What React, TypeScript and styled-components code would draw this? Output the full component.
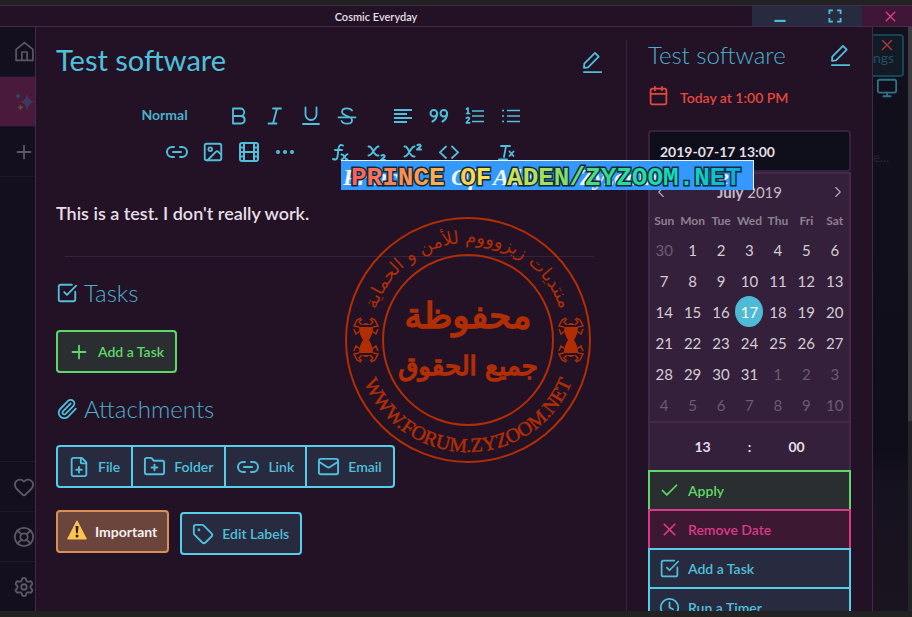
import React from "react";
import styled, { createGlobalStyle, css } from "styled-components";
import {
  Heart, LifeBuoy, Settings, Calendar, Check, X, Plus, SquareCheckBig, Clock, FilePlus, FolderPlus,
  Link2, Mail, Tag, Paperclip, ChevronLeft, ChevronRight, Monitor, Image, Film,
} from "lucide-react";

const C = {
  bg: "#231225", line: "#3a2344", cyan: "#4fc0dc", cyanSoft: "#4ab0cb", border: "#56cde9",
  green: "#5fd86a", pink: "#d93b87", red: "#e5483f", text: "#e4dfe6",
};

const Global = createGlobalStyle`
  * { box-sizing: border-box; }
  body { margin: 0; background: #222222; font-family: Lato, sans-serif; color: ${C.text}; }
  button, input, select { font: inherit; color: inherit; margin: 0; }
  h1, h2, h3, p { margin: 0; }
  svg { display: block; flex: none; }
`;

const Frame = styled.div`
  position: relative;
  display: flex;
  flex-direction: column;
  height: 100vh;
  padding: 5px 0 6px;
  overflow: hidden;
`;
const TitleBar = styled.header`
  display: flex;
  flex: none;
  height: 22px;
  background: ${C.bg};
  border-top: 1px solid #412a4a;
  border-bottom: 1px solid #412a4a;
`;
const AppTitle = styled.div`
  flex: 1;
  text-align: center;
  font-size: 11px;
  line-height: 21px;
  font-weight: 600;
`;
const WinButton = styled.button<{ $close?: boolean }>`
  display: flex;
  align-items: center;
  justify-content: center;
  width: ${(p) => (p.$close ? 50 : 55)}px;
  padding: ${(p) => (p.$close ? "0 0 0 6px" : "0")};
  border: 0;
  background: ${(p) => (p.$close ? "#3f1636" : "#282a40")};
  color: ${(p) => (p.$close ? C.pink : C.cyan)};
`;
const Body = styled.div`
  display: flex;
  flex: 1;
  min-height: 0;
`;
const Rail = styled.nav`
  display: flex;
  flex-direction: column;
  flex: none;
  width: 35px;
  background: #130f1e;
`;
const RailButton = styled.button<{ $active?: boolean; $top?: boolean }>`
  display: flex;
  align-items: center;
  justify-content: flex-end;
  height: 50px;
  padding: 0;
  border: 0;
  ${(p) => (p.$top ? "border-top" : "border-bottom")}: 1px solid #20182a;
  background: ${(p) => (p.$active ? "#4a1a3c" : "transparent")};
  color: #5c5863;
`;
const Spacer = styled.div`flex: 1;`;
const Dialog = styled.section`
  display: flex;
  flex: 1;
  min-width: 0;
  background: ${C.bg};
  border: solid #412a4a;
  border-width: 0 1px;
`;
const Main = styled.main`
  flex: 1;
  min-width: 0;
  margin-top: 13px;
  padding: 0 23px 0 20px;
  border-right: 1px solid ${C.line};
`;
const Side = styled.aside`
  flex: none;
  width: 245px;
  padding: 12px 21px 0 21px;
  overflow: hidden;
`;
const HeadRow = styled.div`
  display: flex;
  align-items: center;
  justify-content: space-between;
`;
const MainTitle = styled.h1`
  color: ${C.cyan};
  font-size: 29px;
  line-height: 40px;
  font-weight: 400;
`;
const SideTitle = styled.h2`
  color: ${C.cyanSoft};
  font-size: 24px;
  line-height: 32px;
  font-weight: 300;
`;
const IconButton = styled.button`
  display: flex;
  align-items: center;
  justify-content: center;
  padding: 0;
  border: 0;
  background: none;
  color: ${C.cyan};
`;
const TitleEdit = styled(IconButton)`padding-top: 4px;`;
const Toolbar = styled.div`
  display: flex;
  flex-direction: column;
  margin-top: 18px;
`;
const ToolRow = styled.div<{ $inset?: boolean }>`
  display: flex;
  justify-content: center;
  gap: 20px;
  height: 36px;
  padding-left: ${(p) => (p.$inset ? 22 : 0)}px;
`;
const ToolGroup = styled.div`display: flex;`;
const Tool = styled(IconButton)`
  width: 36px;
  height: 36px;
`;
const StyleSelect = styled.select`
  width: 70px;
  padding: 0 0 4px 11px;
  border: 0;
  appearance: none;
  background: none;
  color: ${C.cyanSoft};
  font-size: 14px;
  font-weight: 700;
`;
const Note = styled.p`
  margin-top: 31px;
  font-size: 18px;
  line-height: 24px;
  font-weight: 600;
`;
const Rule = styled.hr`
  margin: 31px 9px 0;
  border: 0;
  border-top: 1px solid #322340;
`;
const SectionTitle = styled.h2`
  display: flex;
  align-items: center;
  gap: 6px;
  margin-top: 19px;
  color: ${C.cyanSoft};
  font-size: 24px;
  line-height: 33px;
  font-weight: 300;
  svg { color: ${C.cyan}; }
`;
const tones = {
  cyan: css`border-color: ${C.border}; background: #282a3f; color: ${C.cyan};`,
  green: css`border-color: ${C.green}; background: #2a2e30; color: ${C.green};`,
  pink: css`border-color: ${C.pink}; background: #3d1833; color: ${C.pink};`,
  amber: css`border-color: #d98f57; background: #6b443c; color: #f6efee;`,
};
const Btn = styled.button<{ $tone: keyof typeof tones; $strong?: boolean }>`
  display: inline-flex;
  align-items: center;
  gap: 8px;
  height: 43px;
  padding: ${(p) => (p.$strong ? "0 10px 0 9px" : "0 11px 0 10px")};
  border: 2px solid;
  border-radius: 4px;
  font-size: 14px;
  font-weight: ${(p) => (p.$strong ? 700 : 600)};
  white-space: nowrap;
  ${(p) => tones[p.$tone]}
`;
const ButtonRow = styled.div<{ $gap: number }>`
  display: flex;
  gap: 11px;
  margin-top: ${(p) => p.$gap}px;
`;
const Joined = styled(ButtonRow)`
  gap: 0;
  ${Btn} { border-radius: 0; }
  ${Btn} + ${Btn} { border-left-width: 0; }
  ${Btn}:first-child { border-radius: 4px 0 0 4px; }
  ${Btn}:last-child { border-radius: 0 4px 4px 0; }
`;
const Lowered = styled.div`margin-top: 2px;`;
const Due = styled.p`
  display: flex;
  gap: 11px;
  margin-top: 14px;
  color: ${C.red};
  font-size: 14px;
  line-height: 26px;
  font-weight: 600;
`;
const DateInput = styled.input`
  display: block;
  width: 100%;
  height: 42px;
  margin-top: 19px;
  padding: 0 10px;
  border: 2px solid #37213f;
  border-radius: 4px;
  background: #0e0d1a;
  font-size: 14px;
  font-weight: 700;
`;
const CalendarBox = styled.div`
  background: #35203b;
  border: 2px solid #432a4d;
  border-bottom: 0;
`;
const Month = styled.div`
  display: flex;
  align-items: center;
  justify-content: space-between;
  height: 36px;
  padding: 0 2px;
  color: #c3bac6;
  font-size: 15px;
  strong { font-weight: 700; }
`;
const Days = styled.table`
  width: 100%;
  margin-bottom: 1px;
  border-collapse: collapse;
  table-layout: fixed;
  font-size: 15px;
  th { height: 24px; padding: 0; color: #8d8092; font-size: 12px; line-height: 22px; font-weight: 700; vertical-align: top; }
  td { height: 31px; padding: 0; text-align: center; }
`;
const Day = styled.button<{ $out?: boolean; $on?: boolean }>`
  display: block;
  width: 28px;
  height: 31px;
  margin: 0 auto;
  padding: 0;
  border: 0;
  border-radius: 50%;
  background: ${(p) => (p.$on ? "#4fbad5" : "none")};
  color: ${(p) => (p.$on ? "#fff" : p.$out ? "#6c5b72" : "#d2ccd5")};
`;
const Time = styled.div`
  display: flex;
  align-items: center;
  justify-content: center;
  height: 49px;
  border-top: 2px solid #432a4d;
  font-size: 14px;
  font-weight: 700;
  input { width: 80px; padding: 0; border: 0; background: none; text-align: center; }
  span { width: 14px; text-align: center; }
`;
const Action = styled(Btn)`
  display: flex;
  width: 100%;
  height: 41px;
  padding: 0 9px;
  border-radius: 0;
  & + & { margin-top: -2px; }
`;
const Backdrop = styled.div`
  display: flex;
  flex: none;
  width: 39px;
  background: linear-gradient(#130f1c, #100f1b 40%, #100d1a 72%, #17121f 80%, #19141f);
`;
const BackdropItems = styled.div`
  display: flex;
  flex: 1;
  flex-direction: column;
  color: #2c7488;
`;
const Ghost = styled.button`
  position: relative;
  width: 31px;
  height: 43px;
  margin: 7px 0 0;
  padding: 4px 0 0;
  border: 2px solid #184353;
  border-left: 0;
  border-radius: 0 4px 4px 0;
  background: #121a27;
  color: #25505f;
  font-size: 14px;
  text-align: left;
  svg { position: absolute; top: 0; left: 5px; color: #a6383c; }
`;
const Screen = styled.span`padding-left: 3px;`;
const Ellipsis = styled.span`
  margin-top: 50px;
  color: #292430;
  font-size: 13px;
`;
const Scroll = styled.div`
  width: 4px;
  background: linear-gradient(#3d3c43 0 394px, #26242b 394px);
`;
const Banner = styled.svg`
  position: absolute;
  top: 160px;
  left: 341px;
`;
const Seal = styled.svg`
  position: absolute;
  top: 215px;
  left: 343px;
  pointer-events: none;
`;

const Glyph = ({ children, size = 20, w = 1.8 }: { children: React.ReactNode; size?: number; w?: number }) => (
  <svg width={size} height={size} viewBox="0 0 20 20" fill="none" stroke="currentColor" strokeWidth={w}
    strokeLinecap="round" strokeLinejoin="round" aria-hidden="true">{children}</svg>
);
const Pen = () => (
  <Glyph size={22} w={1.6}>
    <path d="M2 19.2h17" strokeLinecap="butt" />
    <path d="M3 11.5 12.7 1.8l3.4 3.4L6.4 14.900 2.700 15.300z" />
  </Glyph>
);
const Bold = () => <Glyph><path d="M4 2.5h7.5a3.7 3.7 0 0 1 0 7.5H4zM4 10h8.5a3.8 3.8 0 0 1 0 7.5H4z" /></Glyph>;
const Italic = () => <Glyph><path d="M8 2.5h8M3.5 17.5h8M12 2.5l-4 15" /></Glyph>;
const Under = () => <Glyph><path d="M4.5 1.5v7a5.5 5.5 0 0 0 11 0v-7M2 18h16" /></Glyph>;
const Strike = () => (
  <Glyph><path d="M15 4.500C14 2.800 12.300 2.300 10 2.300c-3 0-5 1.300-5 3.500 0 2.400 2.200 3.300 5 4.200 3.300 1 5 1.900 5 4.200 0 2.300-2 3.500-5 3.500-2.600 0-4.600-.8-5.400-2.700M1.500 11.300h17" /></Glyph>
);
const AlignL = () => <Glyph><path d="M1 4h18M1 8h13M1 12h18M1 16h13" strokeLinecap="butt" /></Glyph>;
const Quote = () => (
  <Glyph w={2}><circle cx="4.800" cy="7.300" r="3.300" /><path d="M8.100 7.300c0 4-1.300 6.500-4.600 8.200" />
    <circle cx="14.800" cy="7.300" r="3.300" /><path d="M18.100 7.300c0 4-1.300 6.500-4.600 8.200" /></Glyph>
);
const OList = () => (
  <Glyph w={1.7}><path d="M7 5h12M7 10h12M7 15.500h12" strokeLinecap="butt" /><path d="M1.500 3 3 2v5.500M1.500 7.500h3M1.300 12c2.500-1.500 4 .4 2.400 1.800L1.300 16.800h3.400" /></Glyph>
);
const UList = () => (
  <Glyph w={1.7}><path d="M6 4.500h13M6 10h13M6 15.500h13M1 4.500h2M1 10h2M1 15.500h2" strokeLinecap="butt" /></Glyph>
);
const Dots = () => <Glyph w={0}><g fill="currentColor"><circle cx="3" cy="10" r="2" /><circle cx="10" cy="10" r="2" /><circle cx="17" cy="10" r="2" /></g></Glyph>;
const Formula = () => (
  <Glyph w={1.9}><path d="M12 3.500c-3.500-1.700-4.300 1-4.600 4L6.500 15c-.4 2.400-2 3-4.500 2M4 8h7M10.500 12.500c3-1 3 6 6 5M16.500 12.200c-2 0-4 5.300-6 5.300" /></Glyph>
);
const Sub = () => (
  <Glyph w={2}><path d="M1.500 4.500C6 3 6 15 11.500 13.500M11.500 4.500C7.500 4.500 6 13.500 1.500 13.500M14.500 13.500c3-1.500 4 1 2 2.300L14 18h4" /></Glyph>
);
const Sup = () => (
  <Glyph w={2}><path d="M1.500 4.500C6 3 6 16 11.500 14.500M11.500 4.500C7.500 4.500 6 14.500 1.500 14.500M14.500 3c3-1.500 4 1 2 2.300L14 7.500h4" /></Glyph>
);
const Code = () => <Glyph><path d="M7 4.500.9 10.300 7 16M13 4.500l6.100 5.800L13 16" /></Glyph>;
const Clear = () => <Glyph w={1.8}><path d="M6 4h9M11 4 9 15M4 17.500h8M14.500 9.500l4 4.500M18.500 9.500l-4 4.500" /></Glyph>;
const Expand = () => (
  <Glyph size={14} w={2.6}><path d="M2 7V2h5M13 2h5v5M18 13v5h-5M7 18H2v-5" strokeLinecap="butt" strokeLinejoin="miter" /></Glyph>
);
const Sparkles = () => (
  <svg width="20" height="20" viewBox="0 0 20 20" aria-hidden="true">
    <path d="M12 1Q13 9 20 10 13 11 12 19 11 11 5 10 11 9 12 1Z" fill="#3b3a5c" />
    <path d="M3 1q.5 2.500 3 3-2.500.5-3 3-.5-2.500-3-3 2.500-.5 3-3Z" fill="#275069" />
    <path d="M5.500 12q.5 3 3 3.500-2.500.5-3 3-.5-2.500-3-3 2.500-.5 3-3.500Z" fill="#66453a" />
  </svg>
);
const Warning = () => (
  <svg width="20" height="26" viewBox="0 0 20 26" aria-hidden="true">
    <path d="M10 1.800 19.400 20H.6Z" fill="#fdc44f" stroke="#fdc44f" strokeLinejoin="round" />
    <path d="M8.500 7h3l-.6 7.200H9.100Z" fill="#2b2324" /><circle cx="10" cy="17" r="1.500" fill="#2b2324" />
  </svg>
);

const Spider = ({ x }: { x: number }) => (
  <g transform={`translate(${x} 125)`} fill="#b12e05" stroke="none">
    <path d="M-7-13H7Q7-6 3 0 7 6 7 13H-7Q-7 6-3 0-7-6-7-13ZM-4-15Q0-19 4-15ZM-4 15Q0 19 4 15Z" />
    <path d="M-6-9-10-6-12-11M-7-13-12-14-9-20-5-22M-4-15-7-18-4-21M6-9l4 3 2-5M7-13l5-1-3-6-4-2M4-15l3-3-3-3M-6 9l-4-3-2 5M-7 13l-5 1 3 6 4 2M-4 15l-3 3 3 3M6 9l4-3 2 5M7 13l5 1-3 6-4 2M4 15l3 3-3 3"
      fill="none" stroke="#b12e05" strokeWidth="1.500" />
  </g>
);

const WEEK = ["Sun", "Mon", "Tue", "Wed", "Thu", "Fri", "Sat"];
const WEEKS = Array.from({ length: 6 }, (_, r) => WEEK.map((_, c) => {
  const n = r * 7 + c;
  return { n: n === 0 ? 30 : n > 31 ? n - 31 : n, out: n === 0 || n > 31 };
}));

export default function App() {
  return (
    <>
      <Global />
      <Frame>
        <TitleBar>
          <AppTitle>Cosmic Everyday</AppTitle>
          <WinButton aria-label="Minimize"><Glyph size={14}><path d="M2 17h16" strokeWidth="3" strokeLinecap="butt" /></Glyph></WinButton>
          <WinButton aria-label="Full screen"><Expand /></WinButton>
          <WinButton $close aria-label="Close window"><X size={17} strokeWidth={2} /></WinButton>
        </TitleBar>
        <Body>
          <Rail>
            <RailButton aria-label="Home">
              <Glyph size={21} w={1.6}><path d="M2 8 10 1.500 18 8v10.500H2zM7.500 18v-7.500h5V18" /></Glyph>
            </RailButton>
            <RailButton $active aria-label="Everyday"><Sparkles /></RailButton>
            <RailButton aria-label="Add"><Plus size={22} strokeWidth={2} /></RailButton>
            <Spacer />
            <RailButton $top aria-label="Favorites"><Heart size={22} /></RailButton>
            <RailButton $top aria-label="Help"><LifeBuoy size={22} /></RailButton>
            <RailButton $top aria-label="Settings"><Settings size={22} /></RailButton>
          </Rail>
          <Dialog>
            <Main>
              <HeadRow>
                <MainTitle>Test software</MainTitle>
                <TitleEdit aria-label="Edit title"><Pen /></TitleEdit>
              </HeadRow>
              <Toolbar>
                <ToolRow>
                  <StyleSelect aria-label="Text style"><option>Normal</option></StyleSelect>
                  <ToolGroup>
                    <Tool aria-label="Bold"><Bold /></Tool>
                    <Tool aria-label="Italic"><Italic /></Tool>
                    <Tool aria-label="Underline"><Under /></Tool>
                    <Tool aria-label="Strikethrough"><Strike /></Tool>
                  </ToolGroup>
                  <ToolGroup>
                    <Tool aria-label="Align"><AlignL /></Tool>
                    <Tool aria-label="Quote"><Quote /></Tool>
                    <Tool aria-label="Numbered list"><OList /></Tool>
                    <Tool aria-label="Bulleted list"><UList /></Tool>
                  </ToolGroup>
                </ToolRow>
                <ToolRow $inset>
                  <ToolGroup>
                    <Tool aria-label="Link"><Link2 size={24} /></Tool>
                    <Tool aria-label="Image"><Image size={22} /></Tool>
                    <Tool aria-label="Video"><Film size={24} /></Tool>
                    <Tool aria-label="Divider"><Dots /></Tool>
                  </ToolGroup>
                  <ToolGroup>
                    <Tool aria-label="Formula"><Formula /></Tool>
                    <Tool aria-label="Subscript"><Sub /></Tool>
                    <Tool aria-label="Superscript"><Sup /></Tool>
                    <Tool aria-label="Code"><Code /></Tool>
                  </ToolGroup>
                  <Tool aria-label="Clear formatting"><Clear /></Tool>
                </ToolRow>
              </Toolbar>
              <Note>This is a test. I don't really work.</Note>
              <Rule />
              <SectionTitle><SquareCheckBig size={22} />Tasks</SectionTitle>
              <ButtonRow $gap={21}>
                <Btn $tone="green"><Plus size={22} />Add a Task</Btn>
              </ButtonRow>
              <SectionTitle><Paperclip size={22} />Attachments</SectionTitle>
              <Joined $gap={20}>
                <Btn $tone="cyan"><FilePlus size={22} />File</Btn>
                <Btn $tone="cyan"><FolderPlus size={23} />Folder</Btn>
                <Btn $tone="cyan"><Link2 size={24} />Link</Btn>
                <Btn $tone="cyan"><Mail size={23} />Email</Btn>
              </Joined>
              <ButtonRow $gap={22}>
                <Btn $tone="amber" $strong><Warning />Important</Btn>
                <Lowered><Btn $tone="cyan"><Tag size={22} />Edit Labels</Btn></Lowered>
              </ButtonRow>
            </Main>
            <Side>
              <HeadRow>
                <SideTitle>Test software</SideTitle>
                <IconButton aria-label="Edit title"><Pen /></IconButton>
              </HeadRow>
              <Due><Calendar size={21} />Today at 1:00 PM</Due>
              <DateInput aria-label="Due date" defaultValue="2019-07-17 13:00" />
              <CalendarBox>
                <Month>
                  <IconButton aria-label="Previous month"><ChevronLeft size={18} color="#b5abba" strokeWidth={1.5} /></IconButton>
                  <span><strong>July</strong> 2019</span>
                  <IconButton aria-label="Next month"><ChevronRight size={18} color="#b5abba" strokeWidth={1.5} /></IconButton>
                </Month>
                <Days>
                  <thead><tr>{WEEK.map((d) => <th key={d}>{d}</th>)}</tr></thead>
                  <tbody>
                    {WEEKS.map((row, i) => (
                      <tr key={i}>{row.map((d, j) => <td key={j}><Day $out={d.out} $on={!d.out && d.n === 17}>{d.n}</Day></td>)}</tr>
                    ))}
                  </tbody>
                </Days>
                <Time>
                  <input aria-label="Hour" defaultValue="13" /><span>:</span><input aria-label="Minute" defaultValue="00" />
                </Time>
              </CalendarBox>
              <Action $tone="green"><Check size={21} />Apply</Action>
              <Action $tone="pink"><X size={21} />Remove Date</Action>
              <Action $tone="cyan"><SquareCheckBig size={21} />Add a Task</Action>
              <Action $tone="cyan"><Clock size={21} />Run a Timer</Action>
            </Side>
          </Dialog>
          <Backdrop>
            <BackdropItems>
              <Ghost>ngs<X size={18} /></Ghost>
              <Screen><Monitor size={22} /></Screen>
              <Ellipsis>e...</Ellipsis>
            </BackdropItems>
            <Scroll />
          </Backdrop>
        </Body>
        <Banner width="413" height="30" viewBox="0 0 413 30">
          <defs>
            <linearGradient id="rainbow" gradientUnits="userSpaceOnUse" x1="10" x2="406" y1="0" y2="0">
              <stop offset="0" stopColor="#ff5a5a" /><stop offset=".2" stopColor="#ffa850" />
              <stop offset=".33" stopColor="#ffe14d" /><stop offset=".5" stopColor="#9be060" />
              <stop offset=".65" stopColor="#2fdc8c" /><stop offset=".85" stopColor="#10d8c8" /><stop offset="1" stopColor="#0ba2e0" />
            </linearGradient>
          </defs>
          <rect width="413" height="30" fill="#3399ff" />
          <path d="M0 .5h412.500V30" fill="none" stroke="#e8f2ff" />
          <g aria-hidden="true" fill="#eef5ff" fontFamily="Liberation Serif, serif" fontStyle="italic" fontWeight="700" fontSize="24">
            <text x="2" y="25">Prince</text><text x="110" y="25">Of</text><text x="152" y="25">Aden</text>
            <text x="232" y="25">/Zyzoom</text><text x="354" y="25">.Net</text>
          </g>
          <text x="10" y="25" fontFamily="Liberation Mono, monospace" fontWeight="700" fontSize="26" fill="url(#rainbow)"
            stroke="#152a38" strokeWidth="3" paintOrder="stroke">PRINCE OF ADEN/ZYZOOM.NET</text>
        </Banner>
        <Seal width="250" height="250" viewBox="0 0 250 250" fill="none" stroke="#b12e05" strokeWidth="2">
          <defs>
            <path id="sealTop" d="M28 125a97 97 0 0 1 194 0" />
            <path id="sealBottom" d="M13 125a112 112 0 0 0 224 0" />
          </defs>
          <circle cx="125" cy="125" r="122" />
          <circle cx="125" cy="125" r="85" />
          <g fill="#b12e05" stroke="none" textAnchor="middle">
            <text fontFamily="DejaVu Sans, sans-serif" fontSize="18">
              <textPath href="#sealTop" startOffset="50%">منتديات زيزوووم للأمن و الحماية</textPath>
            </text>
            <text fontFamily="Liberation Serif, serif" fontSize="20" stroke="#b12e05" strokeWidth=".5">
              <textPath href="#sealBottom" startOffset="50%">WWW.FORUM.ZYZOOM.NET</textPath>
            </text>
            <g fontFamily="DejaVu Sans, sans-serif" stroke="#b12e05" strokeWidth="1.500">
              <text x="125" y="113" fontSize="36">محفوظة</text>
              <text x="125" y="160" fontSize="26">جميع الحقوق</text>
            </g>
          </g>
          <Spider x={23} />
          <Spider x={228} />
        </Seal>
      </Frame>
    </>
  );
}
